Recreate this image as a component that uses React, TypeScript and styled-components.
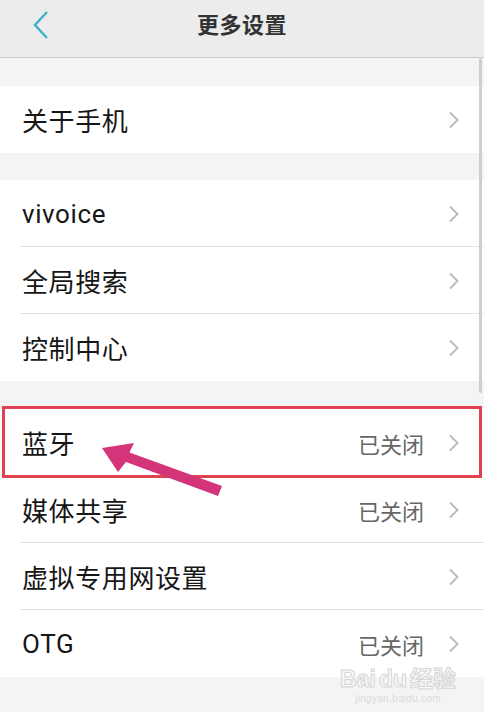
import styled, { createGlobalStyle } from 'styled-components';

const GlobalStyle = createGlobalStyle`
  html, body {
    margin: 0;
    padding: 0;
    background: #f4f4f4;
  }
  body {
    font-family: Roboto, "Noto Sans CJK SC", sans-serif;
  }
`;

const Screen = styled.div`
  position: relative;
  width: 484px;
  height: 712px;
  overflow: hidden;
  background: #f4f4f4;
  display: flex;
  flex-direction: column;
`;

const Header = styled.header`
  height: 57px;
  flex-shrink: 0;
  display: flex;
  align-items: center;
  justify-content: center;
  position: relative;
  background: #ececec;
  border-bottom: 1px solid #cacaca;
`;

const BackButton = styled.div`
  position: absolute;
  left: 30px;
  top: 9px;
  width: 22px;
  height: 32px;
  display: flex;
  align-items: center;
  justify-content: center;
`;

const Title = styled.h1`
  margin: 0 0 12px;
  font-family: "Noto Sans CJK SC", sans-serif;
  font-size: 22px;
  font-weight: 700;
  color: #333;
  letter-spacing: 0.5px;
`;

const Group = styled.section<{ $gap: number }>`
  margin-top: ${({ $gap }) => $gap}px;
  background: #fff;
  display: flex;
  flex-direction: column;
`;

const Row = styled.div<{ $highlight?: boolean }>`
  position: relative;
  height: 67px;
  display: flex;
  align-items: center;
  padding: 0 24px 0 22px;

  & + &::before {
    content: '';
    position: absolute;
    top: -1px;
    left: 20px;
    right: 0;
    height: 1px;
    background: #e2e2e2;
  }

  ${({ $highlight }) => $highlight && `
    &::after {
      content: '';
      position: absolute;
      top: -3px;
      bottom: -2px;
      left: 2px;
      right: 2px;
      border: 3px solid #e0434f;
      z-index: 2;
    }
  `}
`;

const Label = styled.span`
  flex: 1;
  font-family: Roboto, "Noto Sans CJK SC", sans-serif;
  font-size: 26px;
  color: #161616;
  letter-spacing: 0.6px;
`;

const Status = styled.span`
  font-family: "Noto Sans CJK SC", sans-serif;
  font-size: 22px;
  color: #666;
  margin-right: 24px;
`;

const ScrollThumb = styled.div`
  position: absolute;
  right: 2px;
  top: 58px;
  width: 3px;
  height: 335px;
  background: #cfcfcf;
  border-radius: 2px;
`;

const Arrow = styled.svg`
  position: absolute;
  left: 0;
  top: 0;
  pointer-events: none;
  z-index: 3;
`;

const Watermark = styled.div`
  position: absolute;
  right: 28px;
  bottom: 8px;
  display: flex;
  flex-direction: column;
  align-items: center;
  font-family: "Liberation Sans", "Noto Sans CJK SC", sans-serif;
`;

const WatermarkLogo = styled.div`
  display: flex;
  align-items: center;
  gap: 3px;
  font-size: 23px;
  font-weight: 700;
  line-height: 24px;
  color: #f8f8f8;
  -webkit-text-stroke: 1px #d6d6d6;
`;

const WatermarkUrl = styled.div`
  margin-top: 2px;
  font-size: 10px;
  color: #dadada;
  letter-spacing: 0.3px;
`;

const Chevron = () => (
  <svg width="12" height="18" viewBox="0 0 12 18">
    <path d="M2 1.5 L9.5 9 L2 16.5" fill="none" stroke="#bcbcbc" strokeWidth="2" />
  </svg>
);

type Item = { label: string; status?: string; highlight?: boolean };

const groups: { gap: number; items: Item[] }[] = [
  { gap: 28, items: [{ label: '关于手机' }] },
  { gap: 27, items: [{ label: 'vivoice' }, { label: '全局搜索' }, { label: '控制中心' }] },
  {
    gap: 28,
    items: [
      { label: '蓝牙', status: '已关闭', highlight: true },
      { label: '媒体共享', status: '已关闭' },
      { label: '虚拟专用网设置' },
      { label: 'OTG', status: '已关闭' }
    ]
  }
];

const App = (): JSX.Element => (
  <>
    <GlobalStyle />
    <Screen>
      <Header>
        <BackButton>
          <svg width="18" height="30" viewBox="0 0 18 30">
            <path d="M15 2 L3 15 L15 28" fill="none" stroke="#3cb3c8" strokeWidth="2.4" />
          </svg>
        </BackButton>
        <Title>更多设置</Title>
      </Header>

      {groups.map((group) => (
        <Group key={group.items[0].label} $gap={group.gap}>
          {group.items.map((item) => (
            <Row key={item.label} $highlight={item.highlight}>
              <Label>{ item.label }</Label>
              {item.status && <Status>{ item.status }</Status>}
              <Chevron />
            </Row>
          ))}
        </Group>
      ))}

      <ScrollThumb />

      <Arrow width="484" height="712" viewBox="0 0 484 712">
        <polygon
          fill="#d4357a"
          points="102,448 134,443 129.5,452.5 222,486 218,496 126,462 118,472"
        />
      </Arrow>

      <Watermark>
        <WatermarkLogo>
          <span>Bai</span>
          <span>du</span>
          <span>经验</span>
        </WatermarkLogo>
        <WatermarkUrl>jingyan.baidu.com</WatermarkUrl>
      </Watermark>
    </Screen>
  </>
);

export default App;
